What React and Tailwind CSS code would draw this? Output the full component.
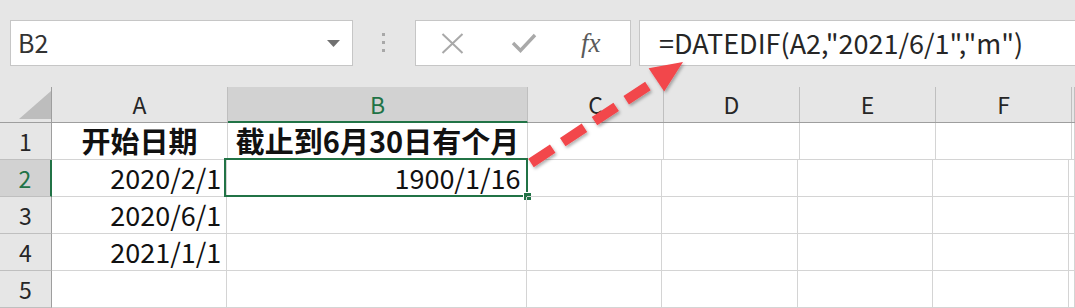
import React from "react";

const font = { fontFamily: '"Noto Sans CJK SC", "Noto Sans", sans-serif' };

const cols = ["A", "B", "C", "D", "E", "F", ""];
const widths = ["w-[176px]", "w-[300px]", "w-[136px]", "w-[136px]", "w-[136px]", "w-[136px]", "w-[3px]"];

const rows = [
  ["开始日期", "截止到6月30日有个月"],
  ["2020/2/1", "1900/1/16"],
  ["2020/6/1", ""],
  ["2021/1/1", ""],
  ["", ""],
];

const Toolbar = () => (
  <div className="h-[87px] bg-[#e6e6e6] flex items-start pt-[20px] pl-[10px]">
    <div className="w-[343px] h-[46px] bg-white border border-[#c6c6c6] flex items-center justify-between pl-[7px] pr-[12px]">
      <span className="text-[25px] text-[#333]">B2</span>
      <svg width="13" height="7" viewBox="0 0 13 7">
        <polygon points="0,0 13,0 6.5,7" fill="#707070" />
      </svg>
    </div>
    <div className="ml-[29px] mr-[30px] flex flex-col gap-[5px] pt-[13px]">
      <div className="w-[3px] h-[3px] bg-[#a8a8a8]" />
      <div className="w-[3px] h-[3px] bg-[#a8a8a8]" />
      <div className="w-[3px] h-[3px] bg-[#a8a8a8]" />
    </div>
    <div className="w-[216px] h-[46px] bg-white border border-[#c6c6c6] flex items-center">
      <svg className="ml-[25px]" width="23" height="21" viewBox="0 0 23 21">
        <path d="M1.5 1 L21.5 20 M21.5 1 L1.5 20" stroke="#a9a9a9" strokeWidth="2" />
      </svg>
      <svg className="ml-[47px]" width="26" height="22" viewBox="0 0 26 22">
        <path d="M2 11 L9.5 18.5 L24 3" stroke="#a9a9a9" strokeWidth="3.4" fill="none" />
      </svg>
      <span
        className="ml-[44px] text-[27px] italic text-[#5a5a5a] leading-none"
        style={{ fontFamily: '"Liberation Serif", serif' }}
      >
        fx
      </span>
    </div>
    <div className="ml-[8px] flex-1 h-[46px] bg-white border-y border-l border-[#c6c6c6] flex items-center pl-[19px]">
      <span className="text-[27px] text-[#262626]">=DATEDIF(A2,"2021/6/1","m")</span>
    </div>
  </div>
);

const HeaderRow = () => (
  <div className="flex h-[36px] bg-[#e6e6e6] border-b border-[#9e9e9e]">
    <div className="w-[52px] border-r border-[#9e9e9e] flex items-end justify-end pb-[3px]">
      <svg width="32" height="28" viewBox="0 0 32 28">
        <polygon points="32,0 32,28 0,28" fill="#bdbdbd" />
      </svg>
    </div>
    {cols.map((c, i) => (
      <div
        key={i}
        className={`${widths[i]} flex items-center justify-center text-[23px] ${
          c === "B"
            ? "bg-[#d2d2d2] text-[#217346] border-b-2 border-[#217346] -mb-[1px] border-r border-r-[#bfbfbf]"
            : "text-[#262626] border-r border-[#bfbfbf]"
        }`}
      >
        {c}
      </div>
    ))}
  </div>
);

const DataRow = ({ n, cells }) => {
  const selected = n === 2;
  return (
    <div className="flex h-[37px]">
      <div
        className={`w-[52px] flex items-center justify-center text-[23px] border-b border-[#bfbfbf] ${
          selected
            ? "bg-[#d2d2d2] text-[#217346] border-r-2 border-r-[#217346]"
            : "bg-[#e6e6e6] text-[#262626] border-r border-r-[#9e9e9e]"
        }`}
      >
        {n}
      </div>
      {cols.map((c, i) => {
        const v = cells[i] || "";
        const header = n === 1;
        return (
          <div
            key={i}
            className={`${widths[i]} relative flex items-center border-b border-r border-[#d4d4d4] text-[#111] whitespace-nowrap ${
              header ? "justify-center font-bold text-[29px]" : "justify-end pr-[5px] text-[27px]"
            }`}
          >
            {v}
            {selected && c === "B" && (
              <div className="absolute -left-[3px] -top-[2px] -right-[2px] -bottom-[1px] border-2 border-[#217346]">
                <div className="absolute -right-[6px] -bottom-[6px] w-[9px] h-[9px] bg-[#217346] border border-white" />
              </div>
            )}
          </div>
        );
      })}
    </div>
  );
};

const Arrow = () => (
  <svg className="absolute left-0 top-0 pointer-events-none" width="1075" height="308" viewBox="0 0 1075 308">
    <defs>
      <filter id="sh" x="-20%" y="-20%" width="140%" height="140%">
        <feDropShadow dx="1.5" dy="2" stdDeviation="1.5" floodColor="#000" floodOpacity="0.3" />
      </filter>
    </defs>
    <g filter="url(#sh)">
      <line x1="531" y1="163" x2="657" y2="80" stroke="#f2464b" strokeWidth="10" strokeDasharray="26 12" />
      <polygon points="683,62 648.6,68.2 664.2,91.4" fill="#f2464b" />
    </g>
  </svg>
);

export default function App() {
  return (
    <div className="relative w-[1075px] h-[308px] overflow-hidden bg-white" style={font}>
      <Toolbar />
      <HeaderRow />
      {rows.map((r, i) => (
        <DataRow key={i} n={i + 1} cells={r} />
      ))}
      <Arrow />
    </div>
  );
}
